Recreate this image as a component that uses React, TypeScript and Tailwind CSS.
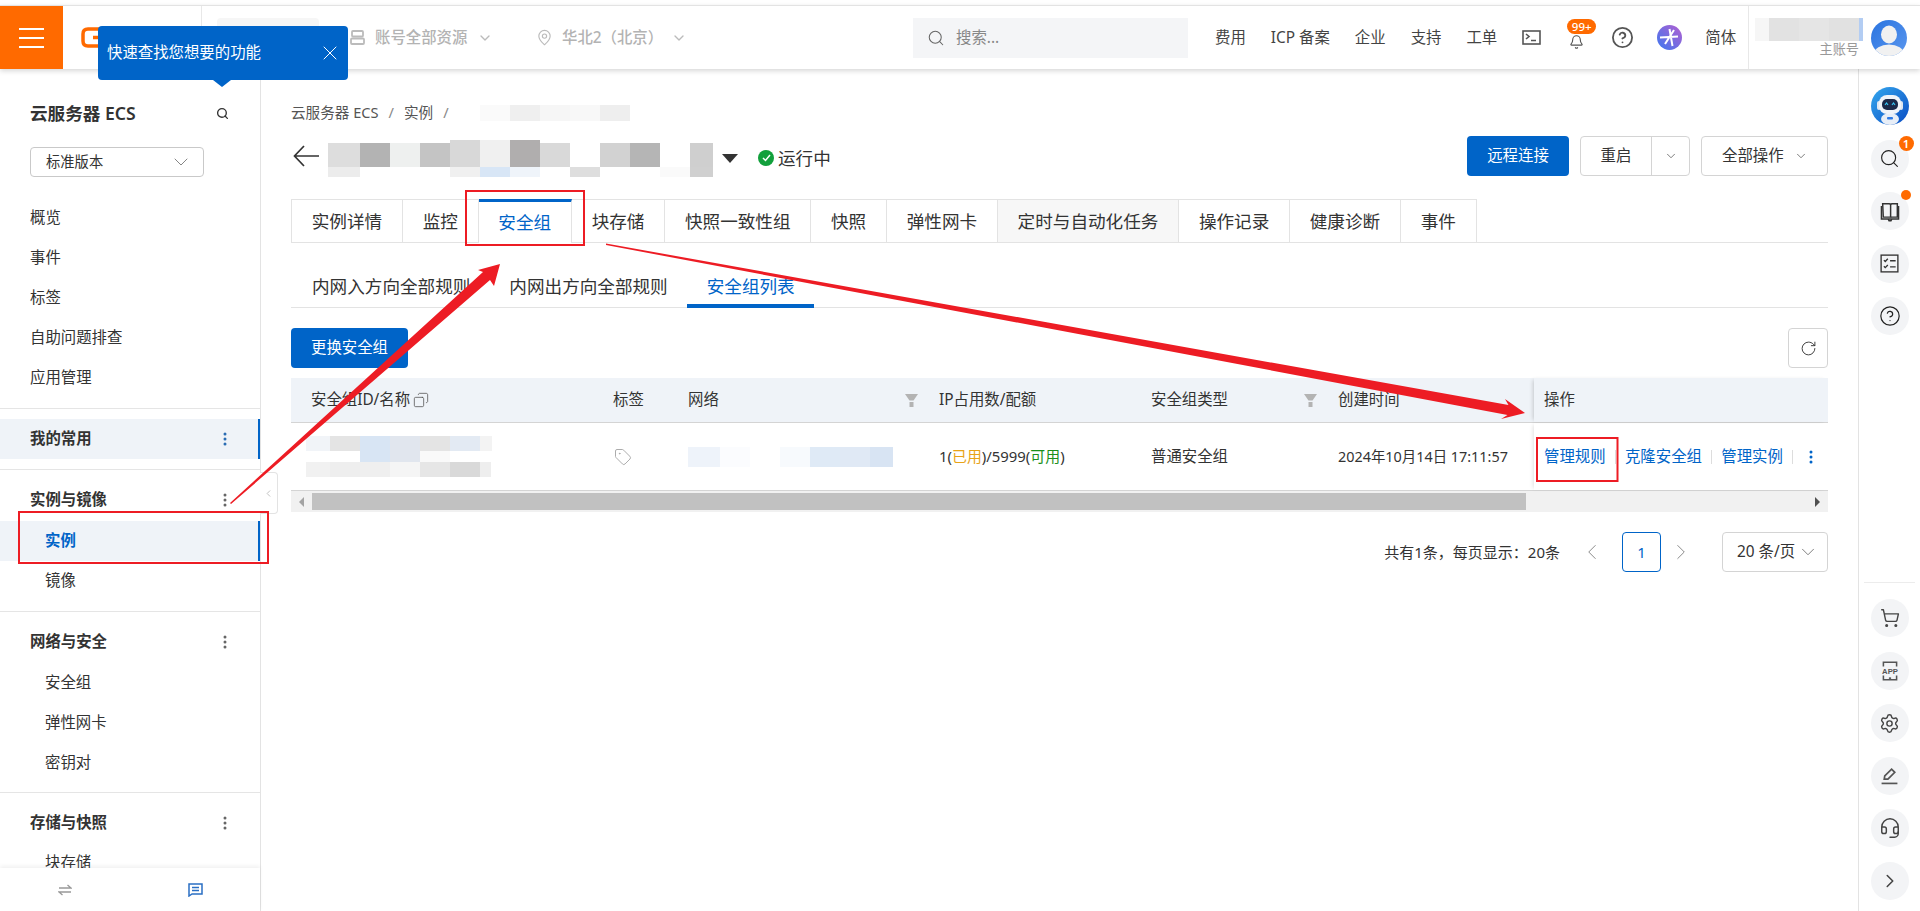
import { Bell, ChevronDown, ChevronLeft, ChevronRight, CircleHelp, Copy, Headset, MapPin, RotateCw, Search, Settings, ShoppingCart, Tag, X } from "lucide-react";
import type { ReactNode } from "react";

type Row = { h: number; cells: [number, string][] };

function Mosaic({ rows }: { rows: Row[] }) {
  return (
    <div className="flex flex-col shrink-0">
      {rows.map((row, i) => (
        <div key={i} className="flex" style={{ height: row.h }}>
          {row.cells.map(([w, c], j) => (
            <div key={j} style={{ width: w, background: c }} />
          ))}
        </div>
      ))}
    </div>
  );
}

const titleBlur: Row[] = [
  { h: 3, cells: [[122, "transparent"], [30, "#d8d8d8"], [30, "#f0f0f0"], [30, "#b0aeae"]] },
  {
    h: 24,
    cells: [
      [32, "#dddddd"], [30, "#b3b3b3"], [30, "#eef0ef"], [30, "#c4c4c4"], [30, "#d8d8d8"], [30, "#f0f0f0"], [30, "#b0aeae"],
      [30, "#d9d9d9"], [30, "#ffffff"], [30, "#d2d2d2"], [30, "#b5b5b5"], [30, "#ffffff"], [23, "#cfcfcf"],
    ],
  },
  {
    h: 10,
    cells: [
      [32, "#ececec"], [90, "#ffffff"], [30, "#f0f0f0"], [30, "#d8e6f6"], [30, "#eff4fa"], [30, "#ffffff"], [30, "#dedede"],
      [60, "#ffffff"], [30, "#fafafa"], [23, "#d0d0d0"],
    ],
  },
];

const crumbBlur: Row[] = [
  { h: 16, cells: [[21, "transparent"], [30, "#fafafa"], [30, "#efefef"], [30, "#f6f6f6"], [30, "#f8f8f8"], [30, "#eeeeee"]] },
];

const idBlur: Row[] = [
  { h: 15, cells: [[24, "#f1f4f8"], [30, "#e4e4e4"], [30, "#d8e5f4"], [30, "#e1e6ee"], [30, "#e4e4e4"], [30, "#e3eaf3"], [12, "#f3f3f3"]] },
  { h: 11, cells: [[54, "transparent"], [30, "#d8e5f4"], [30, "#e1e6ee"], [30, "#f9f9f9"]] },
  { h: 15, cells: [[24, "#f1f1f1"], [30, "#eeeeee"], [30, "#efefef"], [30, "#f5f5f5"], [30, "#e6e6e6"], [30, "#d9d9d9"], [11, "#eeeeee"]] },
];

const netBlur: Row[] = [
  { h: 20, cells: [[32, "#eef3fa"], [30, "#fbfcfe"], [30, "#ffffff"], [30, "#f7fafd"], [30, "#dfeaf6"], [30, "#e0e9f5"], [23, "#d8e4f3"]] },
];

const userBlur: Row[] = [
  { h: 23, cells: [[14, "#f6f6f6"], [30, "#e2e2e2"], [30, "#e5e5e5"], [30, "#e1e1e1"], [4, "#b3cdf3"]] },
];

function Dots({ color = "#666666" }: { color?: string }) {
  return (
    <svg width="4" height="14" viewBox="0 0 4 14" fill={color} className="shrink-0">
      <circle cx="2" cy="2" r="1.5" />
      <circle cx="2" cy="7" r="1.5" />
      <circle cx="2" cy="12" r="1.5" />
    </svg>
  );
}

function NavItem({ label, child }: { label: string; child?: boolean }) {
  return <div className={`h-10 flex items-center text-[#333333] ${child ? "pl-[45px]" : "pl-[30px]"}`}>{label}</div>;
}

function NavHead({ label }: { label: string }) {
  return (
    <div className="h-10 flex items-center justify-between pl-[30px] pr-[33px] font-semibold text-[#333333]">
      <span>{label}</span>
      <Dots />
    </div>
  );
}

function Sidebar() {
  return (
    <aside className="relative w-[261px] shrink-0 border-r border-[#e3e3e3] flex flex-col h-[842px] text-[15.4px]">
      <div className="flex-1 overflow-hidden">
        <div className="flex items-center justify-between pt-[31px] pl-[30px] pr-[31px]">
          <span className="text-[17.6px] leading-[26px] font-semibold text-[#333333]">云服务器 ECS</span>
          <Search size={13} strokeWidth={2.5} className="text-[#333333]" />
        </div>
        <div className="mt-[21px] ml-[30px] w-[174px] h-[30px] border border-[#c9c9c9] rounded-sm flex items-center justify-between pl-[15px] pr-[10px] text-[14.3px] text-[#333333]">
          <span>标准版本</span>
          <ChevronDown size={24} strokeWidth={0.8} className="text-[#666666]" />
        </div>
        <div className="mt-[21px]">
          <NavItem label="概览" />
          <NavItem label="事件" />
          <NavItem label="标签" />
          <NavItem label="自助问题排查" />
          <NavItem label="应用管理" />
        </div>
        <div className="mt-[10px] border-t border-[#e5e5e5]" />
        <div className="mt-[10px] h-10 flex items-center justify-between pl-[30px] pr-[33px] bg-[#eff3f8] border-r-2 border-[#0064c8] font-semibold text-[#333333]">
          <span>我的常用</span>
          <span className="mr-[-2px]"><Dots color="#2a6cb3" /></span>
        </div>
        <div className="mt-[10px] border-t border-[#e5e5e5]" />
        <div className="mt-[10px]">
          <NavHead label="实例与镜像" />
          <div className="mt-px h-10 flex items-center pl-[45px] bg-[#eff3f8] border-r-2 border-[#0064c8] font-semibold text-[#0064c8]">实例</div>
          <NavItem label="镜像" child />
        </div>
        <div className="mt-[10px] border-t border-[#e5e5e5]" />
        <div className="mt-[10px]">
          <NavHead label="网络与安全" />
          <div className="mt-px" />
          <NavItem label="安全组" child />
          <NavItem label="弹性网卡" child />
          <NavItem label="密钥对" child />
        </div>
        <div className="mt-[9px] border-t border-[#e5e5e5]" />
        <div className="mt-[10px]">
          <NavHead label="存储与快照" />
          <NavItem label="块存储" child />
        </div>
      </div>
      <div className="h-[43px] shrink-0 flex items-center bg-white shadow-[0_-2px_4px_rgba(0,0,0,0.06)]">
        <div className="w-[130px] flex justify-center">
          <svg width="14" height="12" viewBox="0 0 14 12" fill="none" stroke="#999999" strokeWidth="1.3">
            <path d="M1 4h12L9.5 1" />
            <path d="M13 8H1l3.5 3" />
          </svg>
        </div>
        <div className="w-[130px] flex justify-center">
          <svg width="15" height="14" viewBox="0 0 15 14" fill="none" stroke="#2a6fc4" strokeWidth="1.5">
            <path d="M1 1h13v10H4l-3 2z" />
            <path d="M4 4.5h7M4 7.5h7" />
          </svg>
        </div>
      </div>
      <div className="absolute left-full top-[403px] w-[18px] h-[42px] bg-white border border-l-0 border-[#e3e3e3] rounded-r-sm flex items-center justify-center">
        <ChevronLeft size={11} className="text-[#bbbbbb]" />
      </div>
    </aside>
  );
}

function Header() {
  return (
    <header className="relative z-20 h-[64px] shrink-0 bg-white border-t border-[#e3e3e3] shadow-[0_2px_5px_rgba(0,0,0,0.16)] flex items-center text-[15.4px] text-[#555555]">
      <div className="w-[63px] h-full bg-[#ff6a00] flex flex-col items-center justify-center gap-[7px]">
        <div className="w-[25px] h-[2px] bg-white" />
        <div className="w-[25px] h-[2px] bg-white" />
        <div className="w-[25px] h-[2px] bg-white" />
      </div>
      <div className="w-[139px] h-full border-r border-[#e8e8e8] flex items-center pl-[18px]">
        <svg width="20" height="21" viewBox="0 0 20 21" fill="none" stroke="#ff6a00" strokeWidth="3.5">
          <path d="M18 2H7Q2 2 2 7v7q0 5 5 5h11" />
          <path d="M12 10.500h8" />
        </svg>
      </div>
      <div className="ml-[15px] w-[102px] h-10 bg-[#f6f6f6] rounded-sm" />
      <svg width="15" height="15" viewBox="0 0 15 15" fill="none" stroke="#bbbbbb" strokeWidth="1.8" className="ml-[31px]">
        <rect x="2" y="1" width="11" height="5.500" rx="1" />
        <rect x="1" y="8.500" width="13" height="5.500" rx="1" />
      </svg>
      <span className="ml-[10px] w-[92px] font-medium text-[#b3b3b3] whitespace-nowrap">账号全部资源</span>
      <ChevronDown size={16} className="ml-[10px] text-[#bbbbbb]" />
      <MapPin size={17} strokeWidth={1.6} className="ml-[43px] text-[#bbbbbb]" />
      <span className="ml-[9px] w-[90px] font-medium text-[#b3b3b3] whitespace-nowrap">华北2（北京）</span>
      <ChevronDown size={16} className="ml-[19px] text-[#bbbbbb]" />
      <div className="ml-[226px] w-[275px] h-10 bg-[#f4f5f7] flex items-center pl-[14px]">
        <Search size={18} strokeWidth={1.4} className="text-[#666666]" />
        <span className="ml-[11px] text-[#888888]">搜索...</span>
      </div>
      <div className="ml-[27px] flex items-center gap-[25px] whitespace-nowrap text-[#444444]">
        <span>费用</span>
        <span>ICP 备案</span>
        <span>企业</span>
        <span>支持</span>
        <span>工单</span>
      </div>
      <svg width="19" height="15" viewBox="0 0 19 15" fill="none" stroke="#555555" strokeWidth="1.6" className="ml-[25px]">
        <rect x="1" y="1" width="17" height="13" />
        <path d="M4 4l3 2.500-3 2.500M9 10.500h5" />
      </svg>
      <div className="relative ml-[28px] w-[15px] h-[20px] flex items-center justify-center">
        <Bell size={16} strokeWidth={1.8} className="text-[#555555] translate-y-[4px]" />
        <span className="absolute left-[-2px] top-[-9px] w-[29px] h-[15px] rounded-full bg-[#ff6a00] text-white text-[11.5px] leading-[15px] text-center font-medium">99+</span>
      </div>
      <CircleHelp size={23} strokeWidth={1.9} className="ml-[27px] text-[#555555]" />
      <svg width="25" height="25" viewBox="0 0 25 25" className="ml-[23px]">
        <defs>
          <linearGradient id="star" x1="0" y1="1" x2="1" y2="0">
            <stop offset="0" stopColor="#3b78f0" />
            <stop offset="1" stopColor="#b45fd0" />
          </linearGradient>
        </defs>
        <circle cx="12.500" cy="12.500" r="12.500" fill="url(#star)" />
        <path d="M3 12.500l18-1M12.500 4l3 17M8 19l9-14" stroke="#ffffff" strokeWidth="2" fill="none" />
      </svg>
      <span className="ml-[23px] text-[#444444]">简体</span>
      <div className="ml-[12px] w-px h-full bg-[#e8e8e8]" />
      <div className="ml-[6px] w-[108px] flex flex-col items-end">
        <Mosaic rows={userBlur} />
        <span className="mt-[1px] mr-[4px] text-[13.2px] leading-[15px] text-[#999999]">主账号</span>
      </div>
      <svg width="36" height="36" viewBox="0 0 36 36" className="ml-[8px]">
        <defs>
          <clipPath id="ava"><circle cx="18" cy="18" r="18" /></clipPath>
          <linearGradient id="avaBg" x1="0" y1="0" x2="1" y2="1">
            <stop offset="0" stopColor="#2a74e0" />
            <stop offset="1" stopColor="#5b97ee" />
          </linearGradient>
        </defs>
        <g clipPath="url(#ava)">
          <rect width="36" height="36" fill="url(#avaBg)" />
          <ellipse cx="18" cy="14.500" rx="8" ry="9" fill="#f1f1f1" />
          <ellipse cx="18" cy="34" rx="15" ry="9.500" fill="#f1f1f1" />
        </g>
      </svg>
    </header>
  );
}

const tabs = ["实例详情", "监控", "安全组", "块存储", "快照一致性组", "快照", "弹性网卡", "定时与自动化任务", "操作记录", "健康诊断", "事件"];

function Tabs() {
  return (
    <div className="mt-[23px] h-[44px] flex items-start border-b border-[#e3e3e3] text-[17.6px]">
      {tabs.map((t, i) => (
        <div
          key={t}
          className={`flex items-center px-[19.75px] border-t border-r border-[#e3e3e3] ${i === 0 ? "border-l" : ""} ${
            i === 2 ? "h-[44px] border-t-[3px] border-t-[#0064c8] bg-white text-[#0064c8]" : "h-[43px] text-[#333333]"
          } ${i === 7 ? "bg-[#f7f7f7]" : ""}`}
        >
          {t}
        </div>
      ))}
    </div>
  );
}

function SubTab({ label, active, first }: { label: string; active?: boolean; first?: boolean }) {
  return (
    <div
      className={`h-10 -mb-px flex items-center px-[19.5px] border-b-4 ${first ? "ml-[1.5px]" : ""} ${
        active ? "border-[#0064c8] text-[#0064c8]" : "border-transparent text-[#333333]"
      }`}
    >
      {label}
    </div>
  );
}

function Filter() {
  return (
    <svg width="13" height="13" viewBox="0 0 13 13" fill="#b3b3b3" className="shrink-0 mr-[1px]">
      <path d="M0 0h13L8.500 6.500H4.500z" />
      <rect x="4.500" y="8" width="4" height="5" />
    </svg>
  );
}

function HeadCell({ children, fixed }: { children: ReactNode; fixed?: boolean }) {
  return <div className={`flex items-center justify-between ${fixed ? "pl-[10px] shadow-[-3px_0_4px_-2px_rgba(0,0,0,0.18)]" : "pl-5"}`}>{children}</div>;
}

function LinkSep() {
  return <span className="w-px h-[14px] mx-[9.2px] bg-[#dddddd] shrink-0" />;
}

function Table() {
  return (
    <div className="mt-[10px] text-[15.4px] text-[#333333]">
      <div className="grid grid-cols-[302px_75px_251px_212px_187px_216px_294px] h-[45px] bg-[#eff3f8] border-b border-[#d4d4d4]">
        <HeadCell>
          <span className="flex items-center gap-[3px]">
            安全组ID/名称
            <Copy size={16} strokeWidth={1.2} className="-scale-x-100 text-[#555555]" />
          </span>
        </HeadCell>
        <HeadCell>标签</HeadCell>
        <HeadCell>网络<Filter /></HeadCell>
        <HeadCell>IP占用数/配额</HeadCell>
        <HeadCell>安全组类型<Filter /></HeadCell>
        <HeadCell>创建时间</HeadCell>
        <HeadCell fixed>操作</HeadCell>
      </div>
      <div className="grid grid-cols-[302px_75px_251px_212px_187px_216px_294px] h-[68px] border-b border-[#d4d4d4]">
        <div className="flex items-center pl-[15px]"><Mosaic rows={idBlur} /></div>
        <div className="flex items-center pl-[21px]">
          <Tag size={18} strokeWidth={1.3} className="text-[#aaaaaa]" />
        </div>
        <div className="flex items-center pl-5"><Mosaic rows={netBlur} /></div>
        <div className="flex items-center pl-5 whitespace-nowrap text-[14.9px]">
          1(<span className="text-[#e8a317]">已用</span>)/5999(<span className="text-[#1a8f1a]">可用</span>)
        </div>
        <div className="flex items-center pl-5">普通安全组</div>
        <div className="flex items-center pl-5 whitespace-nowrap text-[14.4px]">2024年10月14日 17:11:57</div>
        <div className="flex items-center pl-[10px] text-[#0064c8] whitespace-nowrap shadow-[-3px_0_4px_-2px_rgba(0,0,0,0.12)]">
          <span>管理规则</span>
          <LinkSep />
          <span>克隆安全组</span>
          <LinkSep />
          <span>管理实例</span>
          <LinkSep />
          <span className="ml-[7px]"><Dots color="#0064c8" /></span>
        </div>
      </div>
      <div className="h-[21px] bg-[#f1f1f1] flex items-center">
        <div className="w-[21px] flex justify-center">
          <div className="border-y-[5px] border-y-transparent border-r-[5px] border-r-[#a3a3a3]" />
        </div>
        <div className="w-[1214px] h-[17px] bg-[#c1c1c1]" />
        <div className="flex-1 flex justify-end pr-[8px]">
          <div className="border-y-[5px] border-y-transparent border-l-[5px] border-l-[#505050]" />
        </div>
      </div>
    </div>
  );
}

function Pagination() {
  return (
    <div className="mt-[20px] flex items-center justify-end text-[15px] text-[#333333]">
      <span>共有1条，每页显示：20条</span>
      <ChevronLeft size={26} strokeWidth={0.9} className="ml-[19px] text-[#888888]" />
      <div className="ml-[17px] w-[39px] h-10 border border-[#0064c8] rounded-sm flex items-center justify-center text-[#0064c8]">1</div>
      <ChevronRight size={26} strokeWidth={0.9} className="ml-[7px] text-[#888888]" />
      <div className="ml-[28px] w-[106px] h-10 border border-[#d4d4d4] rounded-sm flex items-center pl-[14px] text-[15.4px] whitespace-nowrap">
        <span className="shrink-0">20 条/页</span>
        <ChevronDown size={22} strokeWidth={0.9} className="ml-[2px] shrink-0 text-[#666666]" />
      </div>
    </div>
  );
}

function Main() {
  return (
    <main className="flex-1 min-w-0 pt-[34px] px-[30px] text-[15.4px]">
      <div className="h-5 flex items-center text-[14.6px] text-[#555555]">
        <span>云服务器 ECS</span>
        <span className="mx-[10px] text-[#888888]">/</span>
        <span>实例</span>
        <span className="mx-[10px] text-[#888888]">/</span>
        <Mosaic rows={crumbBlur} />
      </div>
      <div className="mt-[13px] h-10 flex items-center">
        <svg width="26" height="22" viewBox="0 0 26 22" fill="none" stroke="#333333" strokeWidth="1.7" className="ml-[2px] shrink-0">
          <path d="M26 11H1.500M11 1L1.500 11 11 21" />
        </svg>
        <div className="ml-[9px] mt-[5px]"><Mosaic rows={titleBlur} /></div>
        <div className="ml-[9px] mt-[5px] border-x-[8px] border-x-transparent border-t-[9px] border-t-[#333333]" />
        <div className="ml-[20px] mt-[4px] w-4 h-4 rounded-full bg-[#12a03c] flex items-center justify-center">
          <svg width="9" height="8" viewBox="0 0 9 8" fill="none" stroke="#ffffff" strokeWidth="1.5">
            <path d="M1 4l2.500 2.500L8 1" />
          </svg>
        </div>
        <span className="ml-[4px] mt-[4px] text-[17.6px] text-[#333333]">运行中</span>
        <div className="ml-auto w-[102px] h-10 bg-[#0064c8] rounded-sm flex items-center justify-center text-white">远程连接</div>
        <div className="ml-[11px] w-[110px] h-10 border border-[#d4d4d4] rounded-sm flex items-center text-[#333333]">
          <span className="w-[70px] text-center">重启</span>
          <span className="w-px h-full bg-[#d4d4d4]" />
          <span className="flex-1 flex justify-center"><ChevronDown size={14} strokeWidth={1.3} className="text-[#555555]" /></span>
        </div>
        <div className="ml-[11px] w-[127px] h-10 border border-[#d4d4d4] rounded-sm flex items-center pl-[20px] gap-[10px] text-[#333333]">
          <span>全部操作</span>
          <ChevronDown size={14} strokeWidth={1.3} className="text-[#555555]" />
        </div>
      </div>
      <Tabs />
      <div className="h-[65px] flex items-end border-b border-[#e3e3e3] text-[17.6px]">
        <SubTab label="内网入方向全部规则" first />
        <SubTab label="内网出方向全部规则" />
        <SubTab label="安全组列表" active />
      </div>
      <div className="mt-[20px] flex items-center justify-between">
        <div className="w-[117px] h-10 bg-[#0064c8] rounded-sm flex items-center justify-center text-white">更换安全组</div>
        <div className="w-10 h-10 border border-[#d4d4d4] rounded-sm flex items-center justify-center">
          <RotateCw size={17} strokeWidth={1.3} className="text-[#333333]" />
        </div>
      </div>
      <Table />
      <Pagination />
    </main>
  );
}

function RailButton({ children, badge, dot }: { children: ReactNode; badge?: string; dot?: boolean }) {
  return (
    <div className="relative w-[38px] h-[38px] rounded-full bg-[#f3f4f6] flex items-center justify-center text-[#444444]">
      {children}
      {badge && (
        <span className="absolute left-[28px] -top-[4px] w-[15px] h-[15px] rounded-full bg-[#ff6a00] text-white text-[11.5px] leading-[15px] text-center font-semibold">{badge}</span>
      )}
      {dot && <span className="absolute left-[30px] -top-[2px] w-[10px] h-[10px] rounded-full bg-[#ff6a00]" />}
    </div>
  );
}

function RightRail() {
  return (
    <aside className="w-[62px] shrink-0 h-[842px] border-l border-[#e3e3e3] flex flex-col items-center pt-[18px]">
      <div className="flex flex-col items-center gap-[14.5px]">
        <svg width="38" height="38" viewBox="0 0 38 38">
          <defs>
            <linearGradient id="bot" x1="0" y1="0" x2="1" y2="1">
              <stop offset="0" stopColor="#35a8ee" />
              <stop offset="1" stopColor="#0a4cc4" />
            </linearGradient>
          </defs>
          <circle cx="19" cy="19" r="19" fill="url(#bot)" />
          <ellipse cx="19" cy="32" rx="9" ry="6" fill="#e8eef7" />
          <rect x="16" y="30" width="6" height="2.500" rx="1" fill="#2f7ae5" />
          <rect x="6" y="14" width="4" height="9" rx="2" fill="#dfe6f0" />
          <rect x="28" y="14" width="4" height="9" rx="2" fill="#dfe6f0" />
          <rect x="8" y="8" width="22" height="19" rx="8" fill="#f1f4f9" />
          <rect x="11" y="12" width="16" height="11" rx="5" fill="#1c2a4a" />
          <path d="M14 18l1.500-2 1.500 2M21 18l1.500-2 1.500 2" stroke="#38c6f4" strokeWidth="1.2" fill="none" />
        </svg>
        <RailButton badge="1"><Search size={21} strokeWidth={1.3} className="text-[#222222]" /></RailButton>
        <RailButton dot>
          <svg width="22" height="22" viewBox="0 0 18 18" fill="none" stroke="#333333" strokeWidth="1.2">
            <path d="M3 3h5.500a1 1 0 0 1 1 1v10H3.500z" />
            <path d="M9.500 4a1 1 0 0 1 1-1H15v11H9.500" />
            <path d="M2 5v10.500h14V5M7.500 15.500l.7 1.500h1.600l.7-1.500" />
          </svg>
        </RailButton>
        <RailButton>
          <svg width="19" height="19" viewBox="0 0 17 17" fill="none" stroke="#333333" strokeWidth="1.2">
            <rect x="1" y="1" width="15" height="15" />
            <path d="M3.500 5.500l1.200 1.200L7 4.300M3.500 11l1.200 1.200L7 9.800" />
            <path d="M9 6h5M9 11.500h5" />
          </svg>
        </RailButton>
        <RailButton><CircleHelp size={22} strokeWidth={1.3} className="text-[#222222]" /></RailButton>
      </div>
      <div className="mt-[247px] w-[51px] border-t border-[#ececec]" />
      <div className="mt-[16px] flex flex-col items-center gap-[14.5px] text-[#555555]">
        <RailButton><ShoppingCart size={20} strokeWidth={1.7} /></RailButton>
        <RailButton>
          <svg width="22" height="22" viewBox="0 0 20 20" fill="none" stroke="#555555" strokeWidth="1.4">
            <path d="M4 6V2h12v4M4 14v4h12v-4" />
            <path d="M9 16.500h2" />
            <text x="10" y="13" textAnchor="middle" fontSize="7" fill="#555555" stroke="none" fontFamily="Liberation Sans, sans-serif" fontWeight="700">APP</text>
          </svg>
        </RailButton>
        <RailButton><Settings size={21} strokeWidth={1.6} /></RailButton>
        <RailButton>
          <svg width="19" height="19" viewBox="0 0 18 18" fill="none" stroke="#555555" strokeWidth="1.6">
            <path d="M4 12.500l.5-3L11 3l3 3-6.500 6.500z" />
            <path d="M1.500 16.500h15" />
          </svg>
        </RailButton>
        <RailButton><Headset size={22} strokeWidth={1.6} /></RailButton>
        <RailButton><ChevronRight size={22} strokeWidth={1.7} /></RailButton>
      </div>
    </aside>
  );
}

function GuideTip() {
  return (
    <div className="absolute z-30 left-[98px] top-[26px] w-[250px] h-[54px] bg-[#0064c8] rounded-sm flex items-center justify-between pl-[9px] pr-[6px] text-[15.4px] text-white">
      <span>快速查找您想要的功能</span>
      <X size={24} strokeWidth={1} />
      <div className="absolute left-[115px] top-full border-x-[9px] border-x-transparent border-t-[7px] border-t-[#0064c8]" />
    </div>
  );
}

function Annotations() {
  return (
    <svg className="absolute z-40 left-0 top-0 pointer-events-none" width="1920" height="911" viewBox="0 0 1920 911" fill="none">
      <g stroke="#ed1c24" strokeWidth="2">
        <rect x="466" y="191" width="118" height="54" />
        <rect x="19" y="512" width="249" height="51" />
        <rect x="1537" y="438" width="80.500" height="43" />
      </g>
      <polygon fill="#ed1c24" points="230,503 483,272 478,270 500,264 494,286 490,280 231,504" />
      <polygon fill="#ed1c24" points="606,243.500 1508.500,405 1505,399 1525,413 1501,419 1507.500,415 606,245" />
    </svg>
  );
}

export default function App() {
  return (
    <div className="relative w-[1920px] h-[911px] overflow-hidden bg-white pt-[5px] font-['Noto_Sans','Noto_Sans_CJK_SC',sans-serif]">
      <Header />
      <div className="flex">
        <Sidebar />
        <Main />
        <RightRail />
      </div>
      <GuideTip />
      <Annotations />
    </div>
  );
}
